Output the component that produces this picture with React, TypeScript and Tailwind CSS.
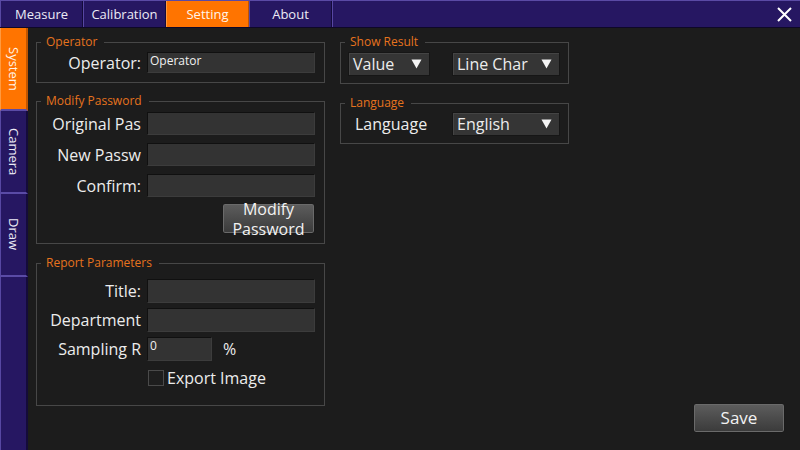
import React from "react";

const Input = ({ w = "w-[168px]", h = "h-[23px]", text = "" }: { w?: string; h?: string; text?: string }) => (
  <div className={`${w} ${h} bg-[#333333] border-t border-l border-t-[#101010] border-l-[#101010] border-b border-r border-b-[#3c3c3c] border-r-[#3c3c3c] text-[12px] leading-[14px] text-[#f0f0f0] pl-[2px] pt-[1px] overflow-hidden`}>
    {text}
  </div>
);

const Row = ({ label, children }: { label: string; children: React.ReactNode }) => (
  <div className="flex items-center">
    <div className="w-[104px] text-right whitespace-nowrap text-[16px] leading-[20px] text-[#ececec]">{label}</div>
    <div className="ml-[6px] flex items-center">{children}</div>
  </div>
);

const Tri = () => (
  <svg width="11" height="10" viewBox="0 0 11 10" className="shrink-0">
    <polygon points="0.5,0.5 10.5,0.5 5.5,9.5" fill="#f4f4f4" />
  </svg>
);

const Dropdown = ({ w, text }: { w: string; text: string }) => (
  <div className={`${w} h-[24px] bg-[#353535] border border-[#161616] shadow-[inset_1px_1px_0_#444] flex items-center justify-between pl-[4px] pr-[7px] text-[16px] leading-[20px] text-[#ececec]`}>
    <span>{text}</span>
    <Tri />
  </div>
);

const Legend = ({ children }: { children: React.ReactNode }) => (
  <legend className="ml-[4px] pl-[5px] pr-[7px] text-[12px] leading-[14px] text-[#e6731e]">{children}</legend>
);

const Btn = ({ className = "", children }: { className?: string; children: React.ReactNode }) => (
  <div className={`${className} rounded-[3px] border border-[#1a1a1a] shadow-[inset_0_0_0_1px_#6a6a6a] bg-gradient-to-b from-[#5e5e5e] to-[#3a3a3a] flex flex-col items-center justify-center text-[#f2f2f2] text-center`}>
    {children}
  </div>
);

export default function App() {
  const tabs = ["Measure", "Calibration", "Setting", "About"];
  const side = ["System", "Camera", "Draw"];
  return (
    <div className="w-[800px] h-[450px] bg-[#1c1c1c] flex flex-col overflow-hidden font-['Open_Sans','Noto_Sans',sans-serif]">
      {/* top bar */}
      <div className="h-[28px] shrink-0 flex bg-[#251560] border-t border-t-[#5a4aa5] border-b border-b-[#0e0828]">
        {tabs.map((t) => (
          <div
            key={t}
            className={`w-[83px] shrink-0 flex items-center justify-center text-[13px] leading-[16px] border-l border-r ${
              t === "Setting"
                ? "bg-[#ff7400] border-l-[#ff9a40] border-r-[#c05500] text-[#fff4ea]"
                : "bg-[#261762] border-l-[#5747a2] border-r-[#140b3a] text-[#ecebf5]"
            }`}
          >
            {t}
          </div>
        ))}
        <div className="flex-1 flex items-center justify-end pr-[8px] bg-[#261762] border-l border-l-[#5747a2]">
          <svg width="15" height="15" viewBox="0 0 15 15">
            <path d="M1 1 L14 14 M14 1 L1 14" stroke="#ffffff" strokeWidth="2" />
          </svg>
        </div>
      </div>

      <div className="flex flex-1 min-h-0">
        {/* sidebar */}
        <div className="w-[28px] shrink-0 flex flex-col bg-[#261762]">
          {side.map((s) => (
            <div
              key={s}
              className={`h-[83px] shrink-0 flex items-center justify-center border-l border-r-2 border-b-2 border-b-[#5a4ba6] ${
                s === "System"
                  ? "bg-[#ff7400] border-l-[#ff9a40] border-r-[#c05500] text-[#fff4ea]"
                  : "bg-[#261762] border-l-[#5747a2] border-r-[#140b3a] text-[#ecebf5]"
              }`}
            >
              <span className="[writing-mode:vertical-rl] text-[13px] leading-[16px]">{s}</span>
            </div>
          ))}
          <div className="flex-1 border-l border-l-[#5747a2] border-r-2 border-r-[#140b3a]" />
        </div>

        {/* main */}
        <div className="flex-1 flex items-start pl-[8px] pt-[7px]">
          {/* left column */}
          <div className="w-[289px] shrink-0 flex flex-col">
            <fieldset className="border border-[#474747] pb-[9px]">
              <Legend>Operator</Legend>
              <div className="mt-[3px]">
                <Row label="Operator:">
                  <Input h="h-[21px]" text="Operator" />
                </Row>
              </div>
            </fieldset>

            <fieldset className="mt-[11px] border border-[#474747] pb-[9px]">
              <Legend>Modify Password</Legend>
              <div className="mt-[4px] flex flex-col gap-[8px]">
                <Row label="Original Pas">
                  <Input />
                </Row>
                <Row label="New Passw">
                  <Input />
                </Row>
                <Row label="Confirm:">
                  <Input />
                </Row>
              </div>
              <div className="flex justify-end pr-[9px] mt-[6px]">
                <Btn className="w-[93px] h-[31px] text-[16px] leading-[20px]">
                  <span>Modify</span>
                  <span>Password</span>
                </Btn>
              </div>
            </fieldset>

            <fieldset className="mt-[12px] border border-[#474747] pb-[19px]">
              <Legend>Report Parameters</Legend>
              <div className="mt-[9px] flex flex-col gap-[5px]">
                <Row label="Title:">
                  <Input h="h-[24px]" />
                </Row>
                <Row label="Department">
                  <Input h="h-[24px]" />
                </Row>
                <Row label="Sampling R">
                  <Input w="w-[65px]" h="h-[24px]" text="0" />
                  <span className="ml-[11px] text-[16px] leading-[20px] text-[#ececec]">%</span>
                </Row>
              </div>
              <div className="mt-[9px] ml-[111px] flex items-center h-[16px]">
                <div className="w-[16px] h-[16px] border border-[#4a4a4a] bg-[#1e1e1e]" />
                <span className="ml-[3px] text-[16px] leading-[20px] text-[#ececec]">Export Image</span>
              </div>
            </fieldset>
          </div>

          {/* right column */}
          <div className="ml-[15px] w-[229px] shrink-0 flex flex-col">
            <fieldset className="border border-[#474747] pb-[7px]">
              <Legend>Show Result</Legend>
              <div className="mt-[3px] pl-[7px] flex gap-[22px]">
                <Dropdown w="w-[82px]" text="Value" />
                <Dropdown w="w-[108px]" text="Line Char" />
              </div>
            </fieldset>
            <fieldset className="mt-[12px] border border-[#474747] pb-[7px]">
              <Legend>Language</Legend>
              <div className="mt-[2px] pl-[7px] flex items-center gap-[22px]">
                <div className="w-[82px] pl-[7px] text-[16px] leading-[20px] text-[#ececec] whitespace-nowrap">Language</div>
                <Dropdown w="w-[108px]" text="English" />
              </div>
            </fieldset>
          </div>

          {/* save column */}
          <div className="flex-1 self-stretch flex flex-col justify-end items-end pr-[15px] pb-[17px]">
            <Btn className="w-[92px] h-[30px] text-[17px] leading-[20px]">Save</Btn>
          </div>
        </div>
      </div>
    </div>
  );
}
